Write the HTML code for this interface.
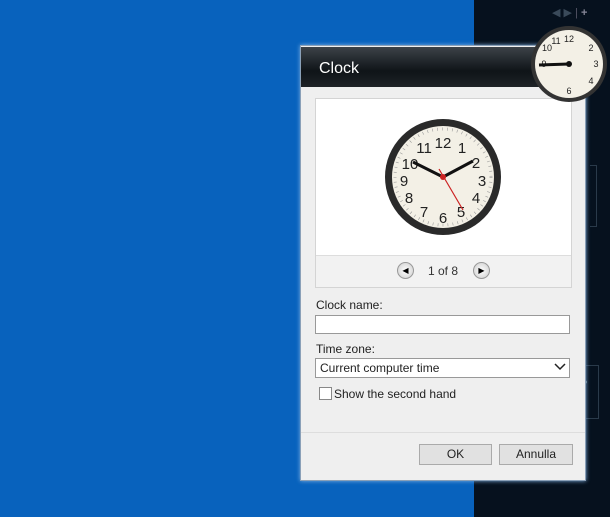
<!DOCTYPE html><html><head><style>
body{margin:0;width:610px;height:517px;overflow:hidden;position:relative;font-family:"Liberation Sans",sans-serif;background:#0862bd}
.a{position:absolute}
</style></head><body>
<div class="a" style="left:474px;top:0;width:136px;height:517px;background:#06111e"></div>
<div class="a" style="left:590px;top:165px;width:6px;height:60px;border:1px solid #2a3a4a;border-left:none"></div>
<div class="a" style="left:578px;top:365px;width:20px;height:52px;border:1px solid #2a3a4a;border-left:none;color:#9aa;font-size:10px;line-height:13px">F<br>5°<br>k</div>
<div class="a" style="left:552px;top:6px;color:#3a4a5a;font-size:11px">◀ ▶ <span style="color:#556">|</span> <b style="color:#889">+</b></div>
<div class="a" style="left:300px;top:45px;width:284px;height:434px;background:#efefef;border:1px solid #8aa0b8;box-shadow:0 0 4px #7fb0e0"></div>
<div class="a" style="left:301px;top:47px;width:284px;height:40px;background:linear-gradient(#3c4248,#0f1418 60%,#1e2226)"></div>
<div class="a" style="left:319px;top:60px;color:#fff;font-size:16px">Clock</div>
<div class="a" style="left:315px;top:98px;width:255px;height:188px;background:#fff;border:1px solid #d4d4d4"></div>
<div class="a" style="left:316px;top:255px;width:255px;height:31px;background:#f2f2f2;border-top:1px solid #ddd"></div>
<div class="a" style="left:397px;top:262px;width:15px;height:15px;border-radius:50%;background:radial-gradient(#fff,#ccc);border:1px solid #999;font-size:8px;text-align:center;line-height:15px">◀</div>
<div class="a" style="left:473px;top:262px;width:15px;height:15px;border-radius:50%;background:radial-gradient(#fff,#ccc);border:1px solid #999;font-size:8px;text-align:center;line-height:15px">▶</div>
<div class="a" style="left:428px;top:264px;font-size:12px;color:#333">1 of 8</div>
<svg class="a" style="left:383px;top:117px" width="120" height="120" viewBox="-60 -60 120 120">
<circle r="58" fill="#2a2a2a"/><circle r="51" fill="#f3f0e6"/>
<circle r="48" fill="none" stroke="#999" stroke-width="3" stroke-dasharray="0.6 4.4"/>
<g font-family="Liberation Sans Narrow,Liberation Sans" font-size="15" fill="#222" text-anchor="middle">
<text x="0" y="-29">12</text><text x="19" y="-24">1</text><text x="33" y="-9">2</text><text x="39" y="9">3</text><text x="33" y="26">4</text><text x="18" y="40">5</text><text x="0" y="46">6</text><text x="-19" y="40">7</text><text x="-34" y="26">8</text><text x="-39" y="9">9</text><text x="-33" y="-8">10</text><text x="-19" y="-24">11</text></g>
<line x1="0" y1="0" x2="-30" y2="-15" stroke="#111" stroke-width="3"/><line x1="0" y1="0" x2="30" y2="-16" stroke="#111" stroke-width="3"/><line x1="-4" y1="-8" x2="20" y2="33" stroke="#c22" stroke-width="1.2"/><circle r="3" fill="#c22"/></svg>
<svg class="a" style="left:530px;top:25px" width="78" height="78" viewBox="-39 -39 78 78">
<circle r="38" fill="#333"/><circle r="34" fill="#f3f0e6"/>
<g font-size="9" fill="#222" text-anchor="middle"><text y="-22">12</text><text x="-22" y="-13">10</text><text x="-13" y="-20">11</text><text x="27" y="3">3</text><text x="0" y="30">6</text><text x="-25" y="3">9</text><text x="22" y="-13">2</text><text x="22" y="20">4</text></g>
<line x1="0" y1="0" x2="-30" y2="1" stroke="#111" stroke-width="3"/><circle r="3" fill="#111"/></svg>
<div class="a" style="left:316px;top:298px;font-size:12px;color:#222">Clock name:</div>
<div class="a" style="left:315px;top:315px;width:253px;height:17px;background:#fff;border:1px solid #999"></div>
<div class="a" style="left:316px;top:342px;font-size:12px;color:#222">Time zone:</div>
<div class="a" style="left:315px;top:358px;width:253px;height:18px;background:#fff;border:1px solid #999"></div>
<div class="a" style="left:320px;top:361px;font-size:12px;color:#222">Current computer time</div>
<svg class="a" style="left:554px;top:363px" width="12" height="8"><path d="M1 1L6 6L11 1" stroke="#222" stroke-width="1.5" fill="none"/></svg>
<div class="a" style="left:319px;top:387px;width:11px;height:11px;background:#fff;border:1px solid #888"></div>
<div class="a" style="left:334px;top:387px;font-size:12px;color:#222">Show the second hand</div>
<div class="a" style="left:301px;top:432px;width:284px;border-top:1px solid #ddd"></div>
<div class="a" style="left:419px;top:444px;width:71px;height:19px;background:#e1e1e1;border:1px solid #aaa;font-size:12px;text-align:center;line-height:19px;color:#222">OK</div>
<div class="a" style="left:499px;top:444px;width:72px;height:19px;background:#e1e1e1;border:1px solid #aaa;font-size:12px;text-align:center;line-height:19px;color:#222">Annulla</div>
</body></html>
